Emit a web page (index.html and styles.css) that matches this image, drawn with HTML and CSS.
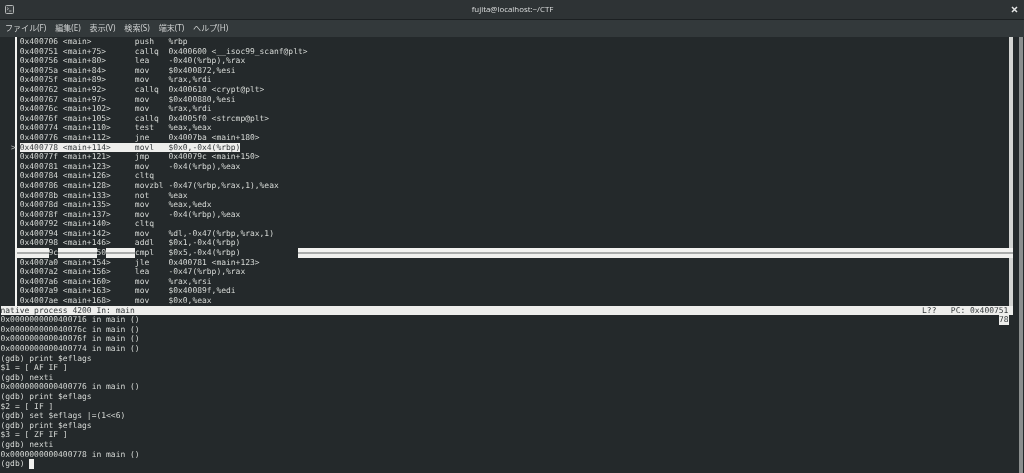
FILE: index.html
```html
<!DOCTYPE html>
<html lang="ja">
<head>
<meta charset="utf-8">
<title>fujita@localhost:~/CTF</title>
<link rel="stylesheet" href="styles.css">
</head>
<body>
<div class="window">
  <header class="titlebar">
    <svg class="term-icon" width="9" height="9" viewBox="0 0 9 9"><rect x="0.5" y="0.5" width="8" height="8" rx="1" fill="#3a3f41" stroke="#b4b7b7"/><path d="M2 2.5l1.5 1.2L2 5" fill="none" stroke="#c8caca" stroke-width=".7"/><path d="M4 6h2.5" stroke="#c8caca" stroke-width=".7"/></svg>
    <div class="title">fujita@localhost:~/CTF</div>
    <svg class="close" width="7" height="7" viewBox="0 0 7 7"><path d="M1 1l5 5M6 1l-5 5" stroke="#e4e5e5" stroke-width="1.5"/></svg>
  </header>
  <nav class="menubar">
    <span class="m1">ファイル(F)</span><span class="m2">編集(E)</span><span class="m2">表示(V)</span><span class="m2">検索(S)</span><span class="m2">端末(T)</span><span class="m2">ヘルプ(H)</span>
  </nav>
  <main class="term">
    <div class="screen">
      <section class="src">
        <div class="row">0x400706 &lt;main&gt;         push   %rbp</div>
        <div class="row">0x400751 &lt;main+75&gt;      callq  0x400600 &lt;__isoc99_scanf@plt&gt;</div>
        <div class="row">0x400756 &lt;main+80&gt;      lea    -0x40(%rbp),%rax</div>
        <div class="row">0x40075a &lt;main+84&gt;      mov    $0x400872,%esi</div>
        <div class="row">0x40075f &lt;main+89&gt;      mov    %rax,%rdi</div>
        <div class="row">0x400762 &lt;main+92&gt;      callq  0x400610 &lt;crypt@plt&gt;</div>
        <div class="row">0x400767 &lt;main+97&gt;      mov    $0x400880,%esi</div>
        <div class="row">0x40076c &lt;main+102&gt;     mov    %rax,%rdi</div>
        <div class="row">0x40076f &lt;main+105&gt;     callq  0x4005f0 &lt;strcmp@plt&gt;</div>
        <div class="row">0x400774 &lt;main+110&gt;     test   %eax,%eax</div>
        <div class="row">0x400776 &lt;main+112&gt;     jne    0x4007ba &lt;main+180&gt;</div>
        <div class="row current"><span class="marker">&gt;</span><span class="hl">0x400778 &lt;main+114&gt;     movl   $0x0,-0x4(%rbp)</span></div>
        <div class="row">0x40077f &lt;main+121&gt;     jmp    0x40079c &lt;main+150&gt;</div>
        <div class="row">0x400781 &lt;main+123&gt;     mov    -0x4(%rbp),%eax</div>
        <div class="row">0x400784 &lt;main+126&gt;     cltq</div>
        <div class="row">0x400786 &lt;main+128&gt;     movzbl -0x47(%rbp,%rax,1),%eax</div>
        <div class="row">0x40078b &lt;main+133&gt;     not    %eax</div>
        <div class="row">0x40078d &lt;main+135&gt;     mov    %eax,%edx</div>
        <div class="row">0x40078f &lt;main+137&gt;     mov    -0x4(%rbp),%eax</div>
        <div class="row">0x400792 &lt;main+140&gt;     cltq</div>
        <div class="row">0x400794 &lt;main+142&gt;     mov    %dl,-0x47(%rbp,%rax,1)</div>
        <div class="row">0x400798 &lt;main+146&gt;     addl   $0x1,-0x4(%rbp)</div>
        <div class="row glitch"><span class="band b1"></span><span>9c</span><span class="band b2"></span><span>50</span><span class="band b3"></span><span class="rest">cmpl   $0x5,-0x4(%rbp)</span><span class="band b4"></span></div>
        <div class="row">0x4007a0 &lt;main+154&gt;     jle    0x400781 &lt;main+123&gt;</div>
        <div class="row">0x4007a2 &lt;main+156&gt;     lea    -0x47(%rbp),%rax</div>
        <div class="row">0x4007a6 &lt;main+160&gt;     mov    %rax,%rsi</div>
        <div class="row">0x4007a9 &lt;main+163&gt;     mov    $0x40089f,%edi</div>
        <div class="row">0x4007ae &lt;main+168&gt;     mov    $0x0,%eax</div>
      </section>
      <div class="status"><span>native process 4200 In: main</span><span>L??   PC: 0x400751</span></div>
      <section class="console">
        <div class="line first"><span>0x0000000000400716 in main ()</span><span class="hl">78</span></div>
        <div class="line">0x000000000040076c in main ()</div>
        <div class="line">0x000000000040076f in main ()</div>
        <div class="line">0x0000000000400774 in main ()</div>
        <div class="line">(gdb) print $eflags</div>
        <div class="line">$1 = [ AF IF ]</div>
        <div class="line">(gdb) nexti</div>
        <div class="line">0x0000000000400776 in main ()</div>
        <div class="line">(gdb) print $eflags</div>
        <div class="line">$2 = [ IF ]</div>
        <div class="line">(gdb) set $eflags |=(1&lt;&lt;6)</div>
        <div class="line">(gdb) print $eflags</div>
        <div class="line">$3 = [ ZF IF ]</div>
        <div class="line">(gdb) nexti</div>
        <div class="line">0x0000000000400778 in main ()</div>
        <div class="line">(gdb) <span class="cursor"> </span></div>
      </section>
    </div>
    <div class="scrollbar"></div>
  </main>
</div>
</body>
</html>
```
FILE: styles.css
```css
* { box-sizing: border-box; }
html, body { margin: 0; height: 100%; background: #24292b; overflow: hidden; }
.window { width: 1024px; height: 473px; display: flex; flex-direction: column; }

.titlebar {
  height: 20px; flex: none; display: flex; align-items: center; justify-content: space-between;
  padding: 0 6px 0 5px; background: #2e3335; border-bottom: 1px solid #1c2022;
}
.title {
  font: 500 7.9px/1 "Open Sans", "Noto Sans", sans-serif; color: #dcdede;
  filter: blur(.3px);
}
.menubar {
  height: 17px; flex: none; display: flex; align-items: center; padding-left: 5px;
  background: #33393b; font: 8.05px/1 "Noto Sans", "Noto Sans CJK JP", sans-serif; color: #d0d2d2;
  filter: blur(.2px);
}
.menubar .m2 { margin-left: 9px; }

.term { flex: 1; display: flex; background: #24292b; min-height: 0; }
.screen {
  flex: 1; min-width: 0; padding-left: .5px;
  font: 7.973px/9.6px "DejaVu Sans Mono", monospace; color: #d6d9d6;
  text-rendering: geometricPrecision; filter: blur(.35px);
}
.scrollbar { width: 4px; margin: 0 1px 0 0; background: #8b8e8e; flex: none; }

.src {
  width: 997.5px; margin-left: 14.5px; position: relative;
  border-left: 2px solid #f2f2f0; border-right: 4px solid #d4d5d3;
}
.row, .line, .status { white-space: pre; }
.row { height: 9.6px; padding-left: 2.7px; }
.current { position: relative; }
.marker { position: absolute; left: -6px; top: 0; color: #c4c7c4; }
.hl { background: #eeeeec; color: #33383a; }

.glitch { display: flex; padding-left: 0; margin-right: -4px; }
.band {
  display: block; height: 9.6px; flex: none;
  background: linear-gradient(#f2f2f0 0 42%, #a9abaa 42% 56%, #f0f0ee 56% 100%);
}
.b1 { width: 31.5px; }
.b2 { width: 38.4px; }
.b3 { width: 28.8px; }
.rest { width: 163.2px; flex: none; }
.b4 { flex: 1 0 0; }

.status {
  height: 9.6px; width: 1012.5px; display: flex; justify-content: space-between;
  padding-right: 4.6px; background: #eeeeec; color: #33383a;
}
.line { height: 9.6px; }
.first { display: flex; justify-content: space-between; width: 1008px; }
.cursor { display: inline-block; width: 4.8px; height: 9.6px; background: #f0f0ee; vertical-align: top; }
```
